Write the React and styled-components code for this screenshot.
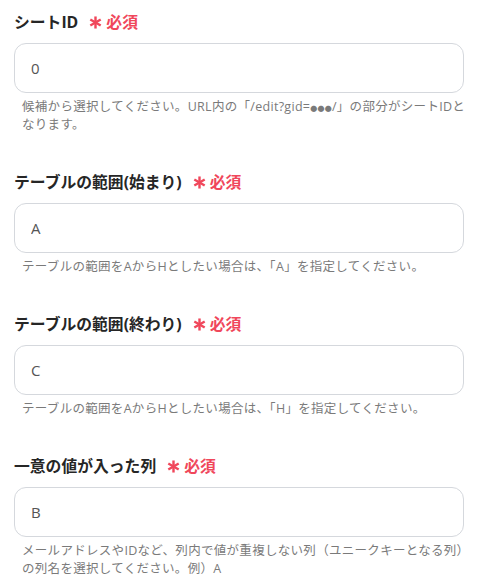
import React from 'react'
import styled, { createGlobalStyle } from 'styled-components'

const Global = createGlobalStyle`
  body {
    margin: 0;
    background: #fff;
    font-family: "Open Sans", "Noto Sans CJK JP", sans-serif;
  }
`

const Dots = styled.span`
  font-size: 7px;
  line-height: 0;
  letter-spacing: 0.2px;
`

const fields = [
  {
    label: 'シートID',
    value: '0',
    help: (
      <>
        候補から選択してください。URL内の「/edit?gid=<Dots>●●●</Dots>/」の部分がシートIDとなります。
      </>
    ),
  },
  {
    label: 'テーブルの範囲(始まり)',
    value: 'A',
    help: 'テーブルの範囲をAからHとしたい場合は、「A」を指定してください。',
  },
  {
    label: 'テーブルの範囲(終わり)',
    value: 'C',
    help: 'テーブルの範囲をAからHとしたい場合は、「H」を指定してください。',
  },
  {
    label: '一意の値が入った列',
    value: 'B',
    help: 'メールアドレスやIDなど、列内で値が重複しない列（ユニークキーとなる列）の列名を選択してください。例）A',
  },
]

const Star = () => (
  <svg width="13" height="13" viewBox="0 0 14 14">
    <g stroke="#f0475b" strokeWidth="2.6">
      <line x1="7" y1="0.5" x2="7" y2="13.5" />
      <line x1="1.4" y1="3.75" x2="12.6" y2="10.25" />
      <line x1="1.4" y1="10.25" x2="12.6" y2="3.75" />
    </g>
  </svg>
)

const App = () => {
  return (
    <Form>
      <Global />
      {fields.map((f) => (
        <Field key={f.label}>
          <Label>
            {f.label}
            <Required>
              <Star />
              必須
            </Required>
          </Label>
          <Input defaultValue={f.value} />
          <Help>{f.help}</Help>
        </Field>
      ))}
    </Form>
  )
}

export default App

const Form = styled.div`
  padding: 11px 14px 0 14px;
  display: flex;
  flex-direction: column;
  gap: 37px;
`

const Field = styled.div`
  display: flex;
  flex-direction: column;
`

const Label = styled.div`
  display: flex;
  align-items: center;
  height: 22px;
  font-size: 15.8px;
  line-height: 22px;
  font-weight: 700;
  color: #262626;
  margin-bottom: 10px;
`

const Required = styled.span`
  display: inline-flex;
  align-items: center;
  gap: 4px;
  margin-left: 11px;
  color: #f0475b;
  font-weight: 700;
`

const Input = styled.input`
  box-sizing: border-box;
  width: 450px;
  height: 50px;
  border: 1px solid #d5d8dd;
  border-radius: 12px;
  padding: 0 16px;
  font-family: "Open Sans", "Noto Sans CJK JP", sans-serif;
  font-size: 15px;
  color: #555;
  background: #fff;
  outline: none;
`

const Help = styled.div`
  margin-top: 5px;
  padding: 0 0 0 8px;
  width: 444px;
  font-size: 12.5px;
  line-height: 18px;
  letter-spacing: 0.3px;
  color: #7a7a7a;
`
